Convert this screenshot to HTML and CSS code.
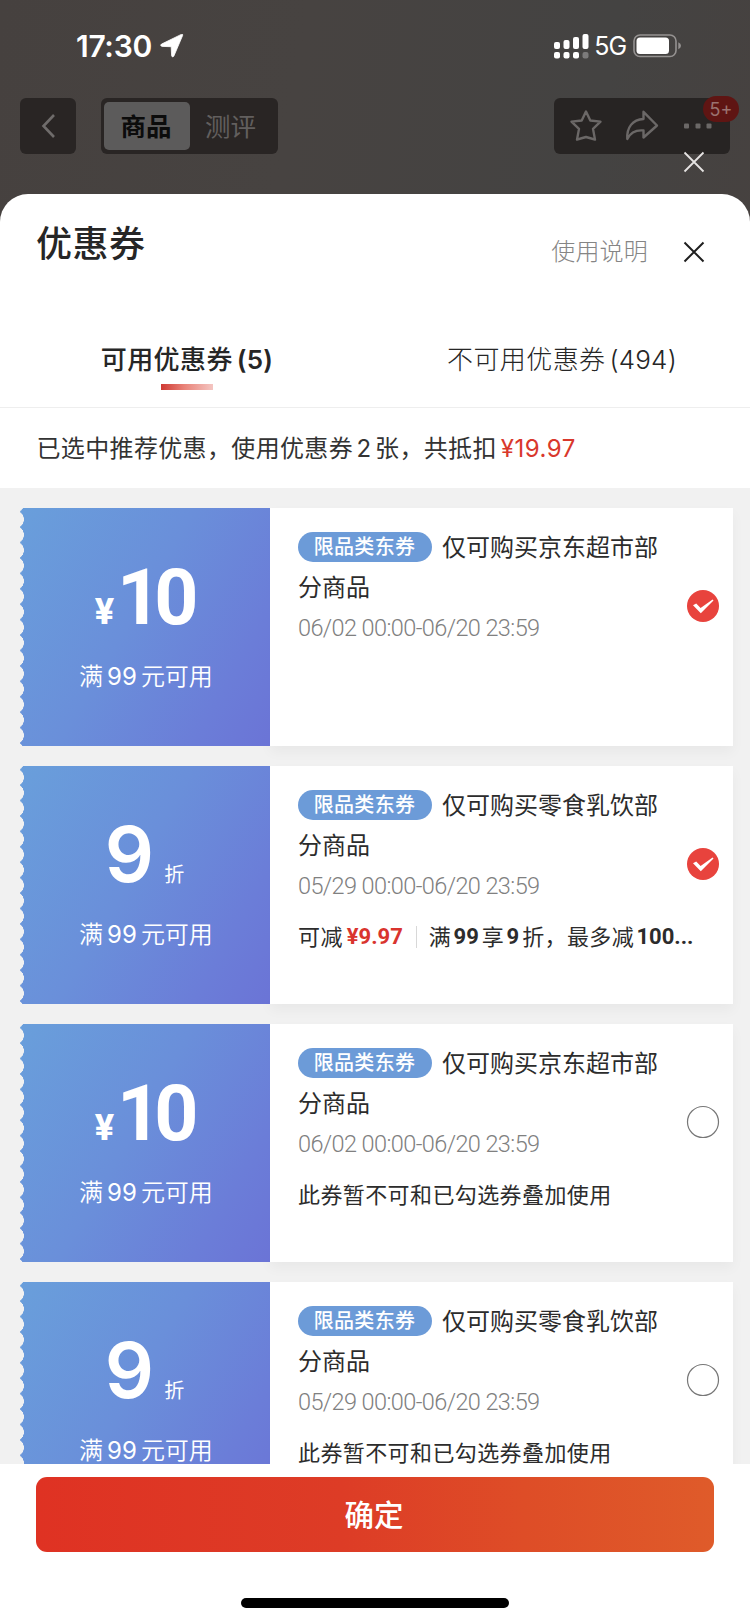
FILE: index.html
```html
<!DOCTYPE html>
<html lang="zh-CN">
<head>
<meta charset="utf-8">
<title>优惠券</title>
<link rel="stylesheet" href="styles.css">
</head>
<body>
<div class="phone">
  <header class="backdrop">
    <div class="status">
      <div class="clock">17:30</div>
      <svg class="locate" width="24" height="24" viewBox="0 0 24 24"><path d="M22.600 1.500 13.800 22.200Q12.500 24 11.600 21.800L11.200 12.700 2.100 12.400Q-.5 11.500 1.500 10.100L21.300 .4Q23.300 0 22.600 1.500Z" fill="#fff" stroke="#fff" stroke-width=".8"/></svg>
      <svg class="signal" width="35" height="25" viewBox="0 0 35 25" fill="#fff"><rect x="0" y="8" width="6" height="7" rx="2"/><rect x="9.500" y="6" width="6" height="9" rx="2"/><rect x="19" y="3" width="6" height="12" rx="2"/><rect x="28.500" y="0" width="6" height="15" rx="2"/><rect x="0" y="18" width="6" height="6.500" rx="2"/><rect x="9.500" y="18" width="6" height="6.500" rx="2"/><rect x="19" y="18" width="6" height="6.500" rx="2"/><rect x="28.500" y="18" width="6" height="6.500" rx="2" opacity=".3"/></svg>
      <div class="net">5G</div>
      <svg class="battery" width="49" height="24" viewBox="0 0 49 24"><rect x="1" y="1" width="42" height="21.500" rx="6" fill="none" stroke="#959291" stroke-width="1.600"/><rect x="3.500" y="3.600" width="32.500" height="16.300" rx="3.500" fill="#fff"/><path d="M45.300 8.200Q48 9.500 48 11.700T45.300 15.300Z" fill="#959291"/></svg>
    </div>
    <nav class="nav">
      <div class="back"><svg width="16" height="26" viewBox="0 0 16 26"><path d="M14 2 3.500 13 14 24" fill="none" stroke="#6f6c6b" stroke-width="2.600"/></svg></div>
      <div class="segment"><div class="seg-on">商品</div><div class="seg-off">测评</div></div>
      <div class="tools">
        <svg width="34" height="34" viewBox="0 0 34 34"><path d="M17 2.500 21.300 11.500 31.500 12.600 24 19.900 26 30.600Q21.500 29.200 17 28 12.500 29.200 8 30.600L10 19.900 2.500 12.600 12.700 11.500Z" fill="none" stroke="#6b6867" stroke-width="2.400" stroke-linejoin="round"/></svg>
        <svg width="34" height="34" viewBox="0 0 34 34"><path d="M18.500 2.800 32 16.500 18.500 28.500V21.500C10 20.700 5.500 23.500 2.300 30 1.500 18.500 7.500 10.500 18.500 10Z" fill="none" stroke="#6b6867" stroke-width="2.400" stroke-linejoin="round"/></svg>
        <svg width="28" height="6" viewBox="0 0 28 6" fill="#6b6867"><rect x="0" y=".5" width="5" height="5" rx="1"/><rect x="11.500" y=".5" width="5" height="5" rx="1"/><rect x="22.500" y=".5" width="5" height="5" rx="1"/></svg>
        <span class="count">5+</span>
      </div>
    </nav>
    <svg class="dismiss" width="22" height="22" viewBox="0 0 22 22"><path d="M1.500 1.500 20.500 20.500M20.500 1.500 1.500 20.500" stroke="#e6e4e3" stroke-width="1.800"/></svg>
  </header>

  <main class="sheet">
    <div class="head">
      <h1>优惠券</h1>
      <div class="help">使用说明</div>
      <svg class="close" width="22" height="22" viewBox="0 0 22 22"><path d="M1.500 1.500 20.500 20.500M20.500 1.500 1.500 20.500" stroke="#1f1f1f" stroke-width="2"/></svg>
    </div>
    <div class="tabs">
      <div class="tab tab-on"><span>可用优惠券<b class="tab-n">(5)</b></span></div>
      <div class="tab"><span>不可用优惠券<span class="tab-n">(494)</span></span></div>
    </div>
    <div class="summary">已选中推荐优惠，使用优惠券<span class="sn">2</span>张，共抵扣<span class="sum-price">¥19.97</span></div>

    <div class="list">
      <article class="coupon">
        <div class="value"><div class="amount"><span class="yen">¥</span><span class="ten">10</span></div><div class="cond">满<span class="cn">99</span>元可用</div></div>
        <div class="info">
          <div class="name"><span class="tag">限品类东券</span>仅可购买京东超市部分商品</div>
          <div class="date">06/02 00:00-06/20 23:59</div>
        </div>
        <svg class="pick" width="34" height="34" viewBox="0 0 34 34"><circle cx="17" cy="17" r="16" fill="#e8433d"/><path d="M7 16.200 10.200 14.500 14.600 19 26.600 10.600 27.500 11.500 14.800 24.200Z" fill="#fff"/></svg>
      </article>
      <article class="coupon">
        <div class="value"><div class="amount rate"><span class="nine">9</span><span class="zhe">折</span></div><div class="cond">满<span class="cn">99</span>元可用</div></div>
        <div class="info">
          <div class="name"><span class="tag">限品类东券</span>仅可购买零食乳饮部分商品</div>
          <div class="date">05/29 00:00-06/20 23:59</div>
          <div class="extra">可减<b class="off">¥9.97</b><i class="bar"></i>满<b>99</b>享<b>9</b>折，最多减<b>100...</b></div>
        </div>
        <svg class="pick" width="34" height="34" viewBox="0 0 34 34"><circle cx="17" cy="17" r="16" fill="#e8433d"/><path d="M7 16.200 10.200 14.500 14.600 19 26.600 10.600 27.500 11.500 14.800 24.200Z" fill="#fff"/></svg>
      </article>
      <article class="coupon">
        <div class="value"><div class="amount"><span class="yen">¥</span><span class="ten">10</span></div><div class="cond">满<span class="cn">99</span>元可用</div></div>
        <div class="info">
          <div class="name"><span class="tag">限品类东券</span>仅可购买京东超市部分商品</div>
          <div class="date">06/02 00:00-06/20 23:59</div>
          <div class="extra">此券暂不可和已勾选券叠加使用</div>
        </div>
        <svg class="pick" width="34" height="34" viewBox="0 0 34 34"><circle cx="17" cy="17" r="15.500" fill="none" stroke="#777" stroke-width="1.200"/></svg>
      </article>
      <article class="coupon">
        <div class="value"><div class="amount rate"><span class="nine">9</span><span class="zhe">折</span></div><div class="cond">满<span class="cn">99</span>元可用</div></div>
        <div class="info">
          <div class="name"><span class="tag">限品类东券</span>仅可购买零食乳饮部分商品</div>
          <div class="date">05/29 00:00-06/20 23:59</div>
          <div class="extra">此券暂不可和已勾选券叠加使用</div>
        </div>
        <svg class="pick" width="34" height="34" viewBox="0 0 34 34"><circle cx="17" cy="17" r="15.500" fill="none" stroke="#777" stroke-width="1.200"/></svg>
      </article>
    </div>

    <footer class="foot">
      <button class="ok">确定</button>
      <div class="home"></div>
    </footer>
  </main>
</div>
</body>
</html>
```
FILE: styles.css
```css
* { box-sizing: border-box; }
body { margin: 0; font-family: Inter, "Noto Sans CJK SC", sans-serif; color: #262626; }
svg { display: block; flex: none; }
.phone {
  width: 750px; height: 1624px; overflow: hidden; display: flex; flex-direction: column;
  background: linear-gradient(100deg, #46413f 0%, #474341 30%, #444342 60%, #47413f 82%, #4a3f3f 100%);
}

/* dimmed page behind the sheet */
.backdrop { height: 194px; flex: none; position: relative; }
.status { height: 98px; padding: 0 68px 6px 76px; display: flex; align-items: center; }
.clock { width: 85px; font-size: 30px; font-weight: 600; color: #fff; letter-spacing: -.3px; line-height: 40px; }
.signal { margin-left: 370px; }
.net { width: 44px; padding-left: 5px; font-size: 25px; line-height: 30px; color: #fff; letter-spacing: -1px; }
.nav { display: flex; height: 56px; padding: 0 20px; }
.back { width: 56px; background: #292524; border-radius: 6px; display: flex; align-items: center; justify-content: center; }
.segment { width: 177px; margin-left: 24.500px; padding: 4px 3px; background: #292524; border-radius: 6px; display: flex; font-size: 25.500px; line-height: 49px; text-align: center; }
.seg-on { width: 86px; padding-right: 1px; background: #5c5b5b; border-radius: 5px; color: #0c0c0c; font-weight: 700; }
.seg-off { flex: 1; padding-right: 3px; color: #625f5e; }
.tools { width: 176px; margin-left: auto; padding-left: 15px; background: #272423; border-radius: 6px; display: flex; align-items: center; gap: 22px; position: relative; }
.tools svg:nth-child(3) { margin-left: 3px; }
.count { position: absolute; right: -9px; top: -2px; width: 36px; height: 26px; border-radius: 13px; background: #5f1513; color: #9a7370; font-size: 18px; line-height: 28px; text-align: center; }
.dismiss { position: absolute; left: 683px; top: 151px; }

.sheet { flex: 1; background: #fff; border-radius: 28px 28px 0 0; display: flex; flex-direction: column; min-height: 0; }
.head { height: 126px; padding: 0 45px 0 36px; display: flex; align-items: flex-start; }
h1 { margin: 25px auto 0 0; font-size: 36px; line-height: 50px; font-weight: 500; letter-spacing: .5px; }
.help { margin-top: 38px; font-size: 24px; line-height: 40px; font-weight: 300; color: #858585; letter-spacing: .2px; }
.close { margin: 47px 0 0 35px; }
.tabs { height: 88px; border-bottom: 1px solid #eee; display: grid; grid-template-columns: 374px 1fr; font-size: 26px; line-height: 40px; padding-top: 20px; }
.tab { text-align: center; font-weight: 300; letter-spacing: .4px; }
.tab-n { margin-left: 4px; letter-spacing: .2px; font-weight: inherit; }
.tab-on { font-weight: 500; }
.tab-on .tab-n { font-weight: 600; }
.tab-on::after { content: ""; display: block; width: 52px; height: 6px; margin: 4px auto 0; background: linear-gradient(90deg, #cf3a33, #e98379 45%, #f4c6c2); }
.summary { height: 80px; padding: 21px 0 0 36.500px; font-size: 24px; line-height: 40px; letter-spacing: .35px; white-space: nowrap; font-weight: 400; color: #333; }
.sn { margin: 0 3.500px; }
.sum-price { margin-left: 4px; color: #d9382c; letter-spacing: .5px; font-weight: 400; }

.list { height: 976px; flex: none; overflow: hidden; background: #f1f1f1; padding: 20px 17px 0 20px; display: flex; flex-direction: column; gap: 20px; }
.coupon { height: 238px; flex: none; display: flex; align-items: flex-start; }
.value { width: 250px; height: 238px; flex: none; position: relative; color: #fff; background: linear-gradient(120deg, #699edb 2%, #6a8fda 45%, #6b7dd8 80%, #6b74d6 100%); }
.value::before {
  content: ""; position: absolute; left: 0; top: 0; width: 4px; height: 238px;
  background: radial-gradient(circle 9.400px at -5.400px 50%, #f1f1f1 96%, transparent) 0 3.700px / 4px 15.430px;
}
.amount { height: 149px; padding: 44px 4px 0 0; display: flex; justify-content: center; align-items: baseline; line-height: 90px; font-weight: 700; }
.amount.rate { padding: 43px 0 0; }
.yen { font: 800 36px/40px Roboto, sans-serif; margin-right: 3px; }
.ten { font-family: Roboto, sans-serif; font-size: 77px; letter-spacing: -7px; padding-top: 1px; }
.nine { font-size: 77px; font-weight: 600; letter-spacing: 0; margin-left: -1px; }
.zhe { margin-left: 10px; font-size: 20px; font-weight: 400; }
.cond { text-align: center; font-size: 24px; line-height: 40px; font-weight: 350; padding-left: 2px; }
.cn { margin: 0 4px; font-weight: 400; }
.info { flex: 1; height: 238px; padding: 20px 0 0 28px; background: #fff; box-shadow: 0 6px 12px rgba(0, 0, 0, .04); }
.name { width: 370px; font-size: 24px; line-height: 40.300px; font-weight: 400; color: #2c2c2c; }
.tag { display: inline-block; vertical-align: 2px; width: 134px; height: 30px; margin-right: 10px; border-radius: 15px; background: #6c9bd8; color: #fff; font-size: 20px; line-height: 31px; letter-spacing: .3px; font-weight: 500; text-align: center; padding-right: 1px; }
.date { margin-top: -1px; font: 300 23.500px/40px Roboto, sans-serif; color: #808080; letter-spacing: -.6px; }
.extra { margin-top: 11px; font-size: 22px; line-height: 40px; letter-spacing: .4px; white-space: nowrap; display: flex; align-items: center; color: #2c2c2c; }
.extra b { font: 700 22px/40px Roboto, sans-serif; margin: 0 3px 0 2.300px; letter-spacing: 0; }
.extra .off { color: #d9342e; margin: 0 3px 0 4px; }
.bar { width: 1px; height: 22px; margin: 0 11.500px 0 10.500px; background: #d8d8d8; }
.pick { margin: 81px 13px 0 -47px; position: relative; }

.foot { flex: 1; padding-top: 13px; display: flex; flex-direction: column; align-items: center; background: #fff; }
.ok { width: 678px; height: 75px; border: 0; padding: 1px 2px 0 0; border-radius: 11px; background: linear-gradient(90deg, #df3223 0%, #dd3c26 45%, #de4d27 72%, #df5b2a 100%); color: #fff; font: 500 29.500px/74px Inter, "Noto Sans CJK SC", sans-serif; }
.home { width: 268px; height: 10px; margin-top: 46px; border-radius: 5px; background: #000; }
```
